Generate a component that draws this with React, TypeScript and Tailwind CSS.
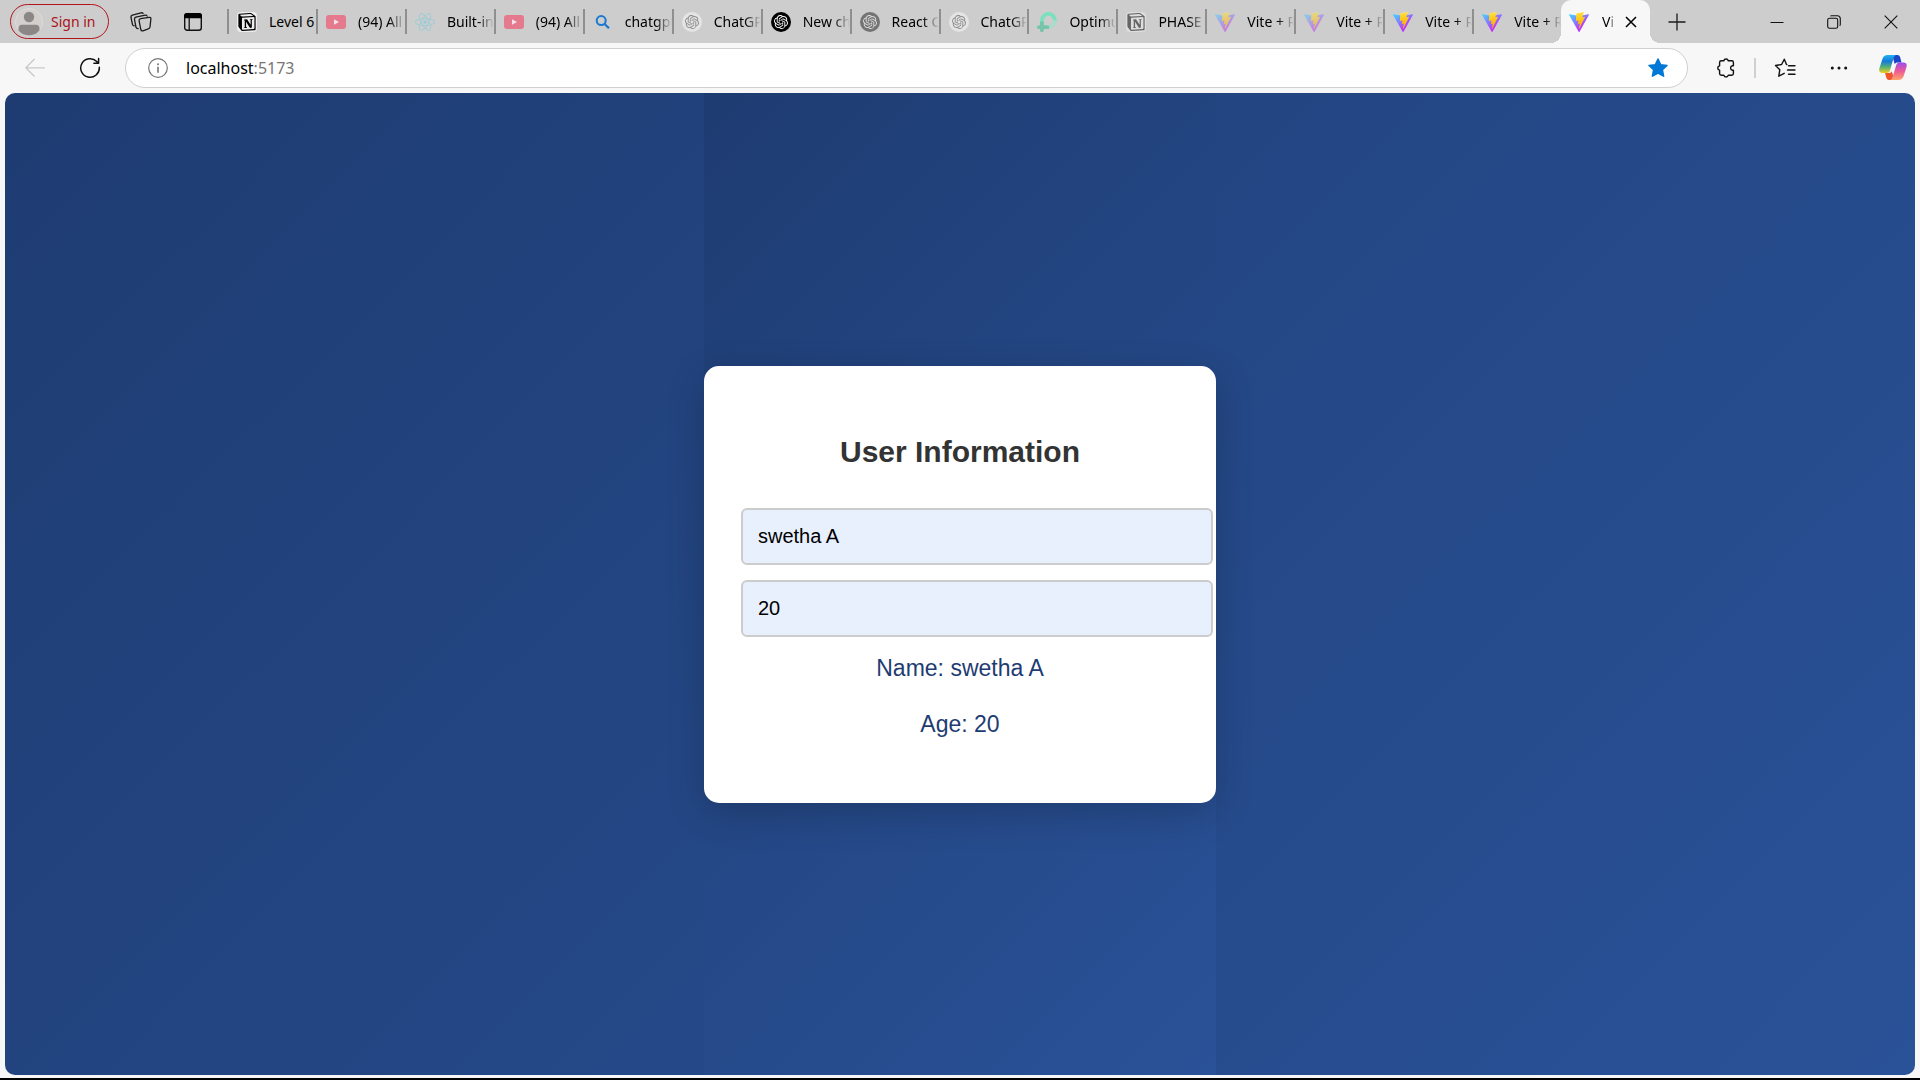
import React, { useState } from "react";
import { SiNotion, SiOpenai } from "react-icons/si";
import { FaReact } from "react-icons/fa";

function ViteIcon({ id }: { id: string }) {
  return (
    <svg viewBox="0 0 256 257" className="size-5" aria-hidden="true">
      <defs>
        <linearGradient id={id + "a"} x1="-.828%" x2="57.636%" y1="7.652%" y2="78.411%">
          <stop offset="0%" stopColor="#41D1FF" />
          <stop offset="100%" stopColor="#BD34FE" />
        </linearGradient>
        <linearGradient id={id + "b"} x1="43.376%" x2="50.316%" y1="2.242%" y2="89.03%">
          <stop offset="0%" stopColor="#FFEA83" />
          <stop offset="8.333%" stopColor="#FFDD35" />
          <stop offset="100%" stopColor="#FFA800" />
        </linearGradient>
      </defs>
      <path
        fill={`url(#${id}a)`}
        d="M255.153 37.938L134.897 252.976c-2.483 4.44-8.862 4.466-11.382.048L.875 37.958c-2.746-4.814 1.371-10.646 6.827-9.67l120.385 21.517a6.537 6.537 0 0 0 2.322-.004l117.867-21.483c5.438-.991 9.574 4.796 6.877 9.62Z"
      />
      <path
        fill={`url(#${id}b)`}
        d="M185.432.063L96.44 17.501a3.268 3.268 0 0 0-2.634 3.014l-5.474 92.456a3.268 3.268 0 0 0 3.997 3.378l24.777-5.718c2.318-.535 4.413 1.507 3.936 3.838l-7.361 36.047c-.495 2.426 1.782 4.5 4.151 3.78l15.304-4.649c2.372-.72 4.652 1.36 4.15 3.788l-11.698 56.621c-.732 3.542 3.979 5.473 5.943 2.437l1.313-2.028l72.516-144.72c1.215-2.423-.88-5.186-3.54-4.672l-25.505 4.922c-2.396.462-4.435-1.77-3.759-4.114l16.646-57.705c.677-2.35-1.37-4.583-3.769-4.113Z"
      />
    </svg>
  );
}

function NotionIcon() {
  return (
    <span className="flex size-5 items-center justify-center rounded-[4px] bg-[#ededed]">
      <SiNotion className="size-[18px] text-black" />
    </span>
  );
}

function YoutubeIcon() {
  return (
    <svg viewBox="0 0 20 20" className="size-5" aria-hidden="true">
      <rect y="3" width="20" height="14" rx="3" fill="#e57a8e" />
      <path d="M8 7.2v5.6l5-2.8z" fill="#f7e3e7" />
    </svg>
  );
}

function SearchIcon() {
  return (
    <svg viewBox="0 0 20 20" className="size-5" fill="none" stroke="#1a78d0" aria-hidden="true">
      <circle cx="8.2" cy="8.6" r="4.5" strokeWidth="2" />
      <path d="M11.6 12l4.4 4.3" strokeWidth="2.3" />
    </svg>
  );
}

function LoopIcon() {
  return (
    <svg viewBox="0 0 20 20" className="size-5" fill="none" strokeWidth="3.8" aria-hidden="true">
      <path d="M17.900 7.500a6.600 6.600 0 0 1-6.300 7.300" stroke="#a9dcca" />
      <path d="M4.900 12V8.600A6.500 6.500 0 0 1 17.900 8.200" stroke="#7be0bf" />
      <path d="M4.900 11v7.200M1.900 15.200h8.600" stroke="#74c5a9" strokeLinecap="round" />
    </svg>
  );
}

type ChatTone = "light" | "dark" | "gray";

function ChatIcon({ tone }: { tone: ChatTone }) {
  const tones: Record<ChatTone, string> = {
    light: "bg-[#e4e4e4] text-[#8c8c8c]",
    dark: "bg-black text-white",
    gray: "bg-[#747474] text-[#dcdcdc]",
  };
  return (
    <span className={`flex size-5 items-center justify-center rounded-full ${tones[tone]}`}>
      <SiOpenai className="size-[14px]" />
    </span>
  );
}

const tabs: { title: string; icon: React.ReactNode; faded?: boolean }[] = [
  { title: "Level 6", icon: <NotionIcon /> },
  { title: "(94) All", icon: <YoutubeIcon /> },
  { title: "Built-in", icon: <FaReact className="size-5 text-[#9bcbd6]" /> },
  { title: "(94) All", icon: <YoutubeIcon /> },
  { title: "chatgpt", icon: <SearchIcon /> },
  { title: "ChatGP", icon: <ChatIcon tone="light" /> },
  { title: "New ch", icon: <ChatIcon tone="dark" /> },
  { title: "React C", icon: <ChatIcon tone="gray" /> },
  { title: "ChatGP", icon: <ChatIcon tone="light" /> },
  { title: "Optimu", icon: <LoopIcon /> },
  { title: "PHASE", icon: <NotionIcon />, faded: true },
  { title: "Vite + R", icon: <ViteIcon id="v1" />, faded: true },
  { title: "Vite + R", icon: <ViteIcon id="v2" />, faded: true },
  { title: "Vite + R", icon: <ViteIcon id="v3" /> },
  { title: "Vite + R", icon: <ViteIcon id="v4" /> },
];

function TabStrip() {
  return (
    <header className="flex h-[43px] items-center bg-[#cdcdcd]">
      <button className="ml-[10px] flex h-[35px] w-[99px] shrink-0 items-center gap-2 rounded-full border border-[#b3141b] pl-1 text-[14px] text-[#a9141a]">
        <svg viewBox="0 0 28 28" className="size-7" aria-hidden="true">
          <circle cx="14" cy="14" r="13.5" fill="#d2cfcc" stroke="#dedbd8" />
          <circle cx="14" cy="9" r="5.2" fill="#8a8786" />
          <path d="M3.6 22.6Q3 17 6.500 16.800h15Q25 17 24.400 22.600A13.500 13.500 0 0 1 14 27.500 13.500 13.500 0 0 1 3.600 22.600Z" fill="#8a8786" />
        </svg>
        Sign in
      </button>
      <button aria-label="Workspaces" className="ml-[6px] flex h-full w-[52px] shrink-0 items-center justify-center">
        <svg viewBox="0 0 22 22" className="size-[22px]" fill="none" stroke="#1b1b1b" strokeWidth="1.3" strokeLinejoin="round" strokeLinecap="round" aria-hidden="true">
          <path d="M10.6 7.600l8.600-1.300q1.800-.2 1.700 1.500l-.9 8.200q-.2 1.500-1.700 1.900l-5.400 1.900q-1.700.4-2.100-1.300l-1.700-8.700q-.2-1.900 1.500-2.200z" />
          <path d="M8.200 17.600q-1.600.2-2.200-1.300L4.500 8.500q-.3-1.900 1.400-2.300l9.300-2q1.500-.2 1.900.9" />
          <path d="M4.200 14.800q-1.300 0-1.700-1.200L1 6.500q-.3-1.800 1.400-2.300L11 1.800q1.500-.3 2 .6" />
        </svg>
      </button>
      <button aria-label="Tab actions menu" className="flex h-full w-[52px] shrink-0 items-center justify-center">
        <svg viewBox="0 0 20 20" className="size-5" fill="none" aria-hidden="true">
          <rect x="1.700" y="1.700" width="16.600" height="16.600" rx="2.500" stroke="#111" strokeWidth="1.400" />
          <path d="M1 6.200V4a3 3 0 0 1 3-3h12a3 3 0 0 1 3 3v2.200z" fill="#000" />
          <path d="M6.200 6v12" stroke="#111" strokeWidth="1.300" />
        </svg>
      </button>
      <nav aria-label="Tabs" className="ml-2 flex h-full min-w-0 max-w-[1423px] flex-1 items-center">
        {tabs.map((tab, i) => (
          <button key={i} className="flex h-[25px] min-w-0 flex-1 basis-0 items-center gap-3 border-l-2 border-[#8f8f8f] pl-2">
            <span className={tab.faded ? "shrink-0 opacity-50" : "shrink-0"}>{tab.icon}</span>
            <span
              className={
                i === 0
                  ? "min-w-0 flex-1 overflow-hidden whitespace-nowrap pb-px text-left text-[14px] text-black"
                  : "min-w-0 flex-1 overflow-hidden whitespace-nowrap pb-px text-left text-[14px] text-black [mask-image:linear-gradient(to_right,black_65%,transparent)]"
              }
            >
              {tab.title}
            </span>
          </button>
        ))}
        <div className="relative flex h-full min-w-0 flex-1 basis-0 items-center rounded-t-[10px] bg-[#f7f7f7] pr-[2px] pl-2 before:absolute before:bottom-0 before:-left-[10px] before:size-[10px] before:bg-[radial-gradient(circle_at_0_0,transparent_10px,#f7f7f7_10px)] after:absolute after:-right-[10px] after:bottom-0 after:size-[10px] after:bg-[radial-gradient(circle_at_100%_0,transparent_10px,#f7f7f7_10px)]">
          <button className="flex items-center gap-3 text-[14px] text-black">
            <ViteIcon id="v5" />
            <span className="w-[14px] overflow-hidden whitespace-nowrap pb-px [mask-image:linear-gradient(to_right,black_60%,transparent)]">Vi</span>
          </button>
          <button aria-label="Close tab" className="ml-[10px] flex size-3 shrink-0 items-center justify-center">
            <svg viewBox="0 0 12 12" className="size-3" stroke="#000" strokeWidth="1.500" aria-hidden="true">
              <path d="M1 1l10 10M11 1L1 11" />
            </svg>
          </button>
        </div>
      </nav>
      <button aria-label="New tab" className="ml-[10px] flex h-full w-[34px] shrink-0 items-center justify-center">
        <svg viewBox="0 0 18 18" className="size-[18px]" stroke="#1b1b1b" strokeWidth="1.300" aria-hidden="true">
          <path d="M9 0.500v17M0.500 9h17" />
        </svg>
      </button>
      <div className="mr-px ml-auto flex h-full shrink-0">
        <button aria-label="Minimize" className="flex w-[57px] items-center justify-center">
          <svg viewBox="0 0 14 14" className="size-[14px]" stroke="#111" aria-hidden="true">
            <path d="M.5 7.500h13" />
          </svg>
        </button>
        <button aria-label="Restore" className="flex w-[57px] items-center justify-center">
          <svg viewBox="0 0 14 14" className="size-[14px]" fill="none" stroke="#111" strokeWidth="1.100" aria-hidden="true">
            <rect x=".7" y="3.300" width="10" height="10" rx="1.800" />
            <path d="M3.300 1.200Q3.800.7 4.700.7h5.600q3 0 3 3v5.600q0 1-.6 1.500" />
          </svg>
        </button>
        <button aria-label="Close" className="flex w-[57px] items-center justify-center">
          <svg viewBox="0 0 14 14" className="size-[14px]" stroke="#111" strokeWidth="1.100" aria-hidden="true">
            <path d="M.7.7l12.600 12.600M13.300.7L.7 13.300" />
          </svg>
        </button>
      </div>
    </header>
  );
}

function CopilotIcon() {
  return (
    <svg viewBox="0 0 28 28" className="size-7" aria-hidden="true">
      <defs>
        <linearGradient id="cpA" x1="0" y1="0" x2="0" y2="1">
          <stop offset="0" stopColor="#1fb4f0" />
          <stop offset=".35" stopColor="#1679dd" />
          <stop offset=".65" stopColor="#4fae7c" />
          <stop offset="1" stopColor="#f2cf1c" />
        </linearGradient>
        <linearGradient id="cpB" x1="0" y1="0" x2="0" y2="1">
          <stop offset="0" stopColor="#9d4bea" />
          <stop offset=".5" stopColor="#ee5a95" />
          <stop offset="1" stopColor="#ffa66b" />
        </linearGradient>
      </defs>
      <path d="M13 1h5.500q2 0 2.600 2l1.400 5.500h-4.500q-1.600 0-2.200 1.700z" fill="#1a45c8" />
      <path d="M15.500 26H10q-2 0-2.600-2L6 19h4.500q1.700 0 2.300-1.700z" fill="#f0562e" />
      <path d="M8.500 1H17q-1.700.5-2.500 3.300l-3.300 11.500Q10.300 19 7.500 19H3.700Q-.7 19 .4 14.300L3.500 4.700Q4.800 1 8.500 1z" fill="url(#cpA)" />
      <path d="M19.700 26h-8.500q1.700-.5 2.500-3.300L17 11.800Q18 8.500 20.600 8.500h3.700q4.200 0 3.200 4.400l-2.900 9.400Q23.300 26 19.700 26z" fill="url(#cpB)" />
    </svg>
  );
}

function Toolbar() {
  return (
    <div className="flex h-[50px] items-center bg-[#f7f7f7]">
      <button aria-label="Back" className="ml-[7px] flex h-10 w-[56px] shrink-0 items-center justify-center">
        <svg viewBox="0 0 20 20" className="size-5" fill="none" stroke="#c9c9c9" strokeWidth="1.300" aria-hidden="true">
          <path d="M20 9.800H.8M9.500 1L.8 9.800l8.700 8.700" />
        </svg>
      </button>
      <button aria-label="Refresh" className="flex h-10 w-[54px] shrink-0 items-center justify-center">
        <svg viewBox="0 0 22 22" className="size-[22px]" fill="none" stroke="#111" strokeWidth="1.500" strokeLinecap="round" strokeLinejoin="round" aria-hidden="true">
          <path d="M20.300 10.200A9.300 9.300 0 1 1 17.800 4.600l1.600 1.600M19.600 1.600v4.700h-4.700" />
        </svg>
      </button>
      <div className="ml-2 flex h-10 min-w-0 flex-1 items-center rounded-full border border-[#d0d0d0] bg-white pr-[19px] pl-[22px]">
        <button aria-label="View site information" className="shrink-0">
          <svg viewBox="0 0 20 20" className="size-5" fill="none" stroke="#767676" aria-hidden="true">
            <circle cx="10" cy="10" r="9.300" strokeWidth="1.200" />
            <path d="M10 8.700v6" strokeWidth="1.600" />
            <circle cx="10" cy="6.200" r="1" fill="#767676" stroke="none" />
          </svg>
        </button>
        <a href="http://localhost:5173" className="ml-[18px] min-w-0 flex-1 truncate text-[16px] text-black">
          localhost<span className="text-[#767676]">:5173</span>
        </a>
        <button aria-label="Edit favorite" className="shrink-0">
          <svg viewBox="0 0 20 20" className="size-5" fill="#0078d7" stroke="#0078d7" strokeWidth="1.500" strokeLinejoin="round" aria-hidden="true">
            <path d="M10 1l2.700 5.700 6.300.8-4.600 4.300 1.200 6.400L10 15.200l-5.600 3 1.200-6.400L1 7.500l6.300-.8z" />
          </svg>
        </button>
      </div>
      <button aria-label="Extensions" className="ml-[10px] flex h-10 w-[55px] shrink-0 items-center justify-center">
        <svg viewBox="0 0 20 20" className="size-5" fill="none" stroke="#111" strokeWidth="1.400" strokeLinejoin="round" aria-hidden="true">
          <path d="M5.300 2.800h2.500a2.300 2.300 0 0 1 4.500 0h3.400q1.700 0 1.700 1.700v3.300h-1a2.300 2.300 0 0 0 0 4.500h1v3.200q0 1.700-1.700 1.700h-3.400a2.300 2.300 0 0 1-4.500 0H5.300q-1.700 0-1.700-1.700v-3.200a2.300 2.300 0 0 1 0-4.500V4.500q0-1.700 1.700-1.700z" />
        </svg>
      </button>
      <div className="ml-px h-5 w-[2px] shrink-0 bg-[#d0d0d0]" />
      <button aria-label="Favorites" className="ml-[2px] flex h-10 w-[54px] shrink-0 items-center justify-center">
        <svg viewBox="0 0 22 22" className="size-[22px]" fill="none" stroke="#111" strokeWidth="1.400" strokeLinejoin="round" strokeLinecap="round" aria-hidden="true">
          <path d="M12.800 7.500h-.3L10.300 2.200 7.600 7.500 1.500 8.500l4.300 4.200-1 6.500 5.400-2.900M14.500 8.800h6.500M13.500 13h7.500M14.500 17.200h6.500" />
        </svg>
      </button>
      <button aria-label="Settings and more" className="flex h-10 w-[54px] shrink-0 items-center justify-center">
        <svg viewBox="0 0 18 18" className="size-[18px]" fill="#111" aria-hidden="true">
          <circle cx="2.300" cy="9" r="1.500" />
          <circle cx="9" cy="9" r="1.500" />
          <circle cx="15.700" cy="9" r="1.500" />
        </svg>
      </button>
      <button aria-label="Copilot" className="flex h-10 w-[54px] shrink-0 items-center justify-center">
        <CopilotIcon />
      </button>
    </div>
  );
}

function UserCard() {
  const [name, setName] = useState("swetha A");
  const [age, setAge] = useState("20");
  const field =
    "h-[57px] w-[472px] rounded-[6px] border-2 border-[#cccccc] bg-[#e8f0fe] px-[15px] text-[20px] leading-6 text-black";
  return (
    <section className="w-[512px] rounded-[15px] bg-white px-[37px] pt-[67px] pb-[64px] text-center font-['Liberation_Sans',Arial,sans-serif] shadow-[0_10px_38px_rgba(0,0,0,0.2)]">
      <h2 className="mb-[37px] text-[30px] leading-[38px] font-bold text-[#333333]">User Information</h2>
      <form className="flex flex-col gap-[15px]">
        <input aria-label="Name" className={field} value={name} onChange={(e) => setName(e.target.value)} />
        <input aria-label="Age" className={field} value={age} onChange={(e) => setAge(e.target.value)} />
      </form>
      <div className="mt-4 flex flex-col gap-[26px] text-[23px] leading-[30px] text-[#1e3c72]">
        <p>Name: {name}</p>
        <p>Age: {age}</p>
      </div>
    </section>
  );
}

export default function App() {
  return (
    <div className="flex min-h-screen flex-col border-b-2 border-black bg-[#f7f7f7] font-['Noto_Sans',sans-serif]">
      <TabStrip />
      <Toolbar />
      <main className="mx-[5px] mb-[3px] flex flex-1 justify-center overflow-hidden rounded-[10px] bg-[linear-gradient(135deg,#1e3c72,#2a5298)]">
        <div className="flex items-center bg-[linear-gradient(135deg,#1e3c72,#2a5298)]">
          <UserCard />
        </div>
      </main>
    </div>
  );
}
